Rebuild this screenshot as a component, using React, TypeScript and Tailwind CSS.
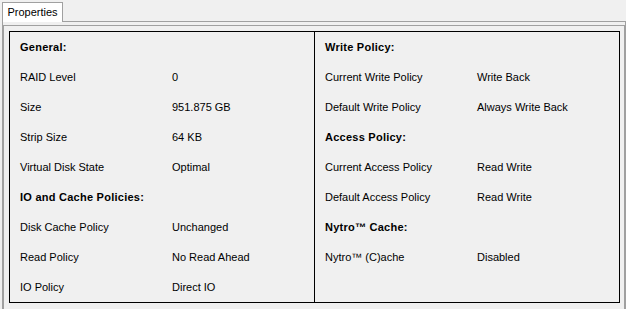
import React from "react";

type Row = { label: string; value?: string; header?: boolean };

const left: Row[] = [
  { label: "General:", header: true },
  { label: "RAID Level", value: "0" },
  { label: "Size", value: "951.875 GB" },
  { label: "Strip Size", value: "64 KB" },
  { label: "Virtual Disk State", value: "Optimal" },
  { label: "IO and Cache Policies:", header: true },
  { label: "Disk Cache Policy", value: "Unchanged" },
  { label: "Read Policy", value: "No Read Ahead" },
  { label: "IO Policy", value: "Direct IO" },
];

const right: Row[] = [
  { label: "Write Policy:", header: true },
  { label: "Current Write Policy", value: "Write Back" },
  { label: "Default Write Policy", value: "Always Write Back" },
  { label: "Access Policy:", header: true },
  { label: "Current Access Policy", value: "Read Write" },
  { label: "Default Access Policy", value: "Read Write" },
  { label: "Nytro\u2122 Cache:", header: true },
  { label: "Nytro\u2122 (C)ache", value: "Disabled" },
];

function Column({ rows, className }: { rows: Row[]; className?: string }) {
  return (
    <div className={"flex flex-col pl-[10px] " + (className ?? "")}>
      {rows.map((r, i) => (
        <div key={i} className="flex h-[30px] items-center">
          {r.header ? (
            <span className="font-bold tracking-[0.25px]">{r.label}</span>
          ) : (
            <>
              <span className="w-[152px] shrink-0">{r.label}</span>
              <span>{r.value}</span>
            </>
          )}
        </div>
      ))}
    </div>
  );
}

export default function App() {
  return (
    <div className="w-[626px] h-[309px] overflow-hidden bg-[#f0f0f0] text-[11px] text-black font-['Liberation_Sans',Arial,sans-serif] leading-none">
      <div className="flex h-[22px]">
        <div className="ml-[2px] mt-[2px] flex h-[20px] w-[61px] items-center justify-center border border-b-0 border-[#a0a0a0] bg-white pb-[1px]">
          Properties
        </div>
        <div className="flex-1 border-b border-[#a0a0a0]" />
      </div>
      <div className="ml-[2px] h-[287px] w-[624px] border-l border-r border-[#a0a0a0] pt-[3px]">
        <div className="h-full border-l border-r border-t border-[#a0a0a0] pl-[5px] pt-[5px]">
          <div className="flex h-[272px] w-[611px] border border-black">
            <Column rows={left} className="w-[305px] border-r border-black" />
            <Column rows={right} className="flex-1" />
          </div>
        </div>
      </div>
    </div>
  );
}
